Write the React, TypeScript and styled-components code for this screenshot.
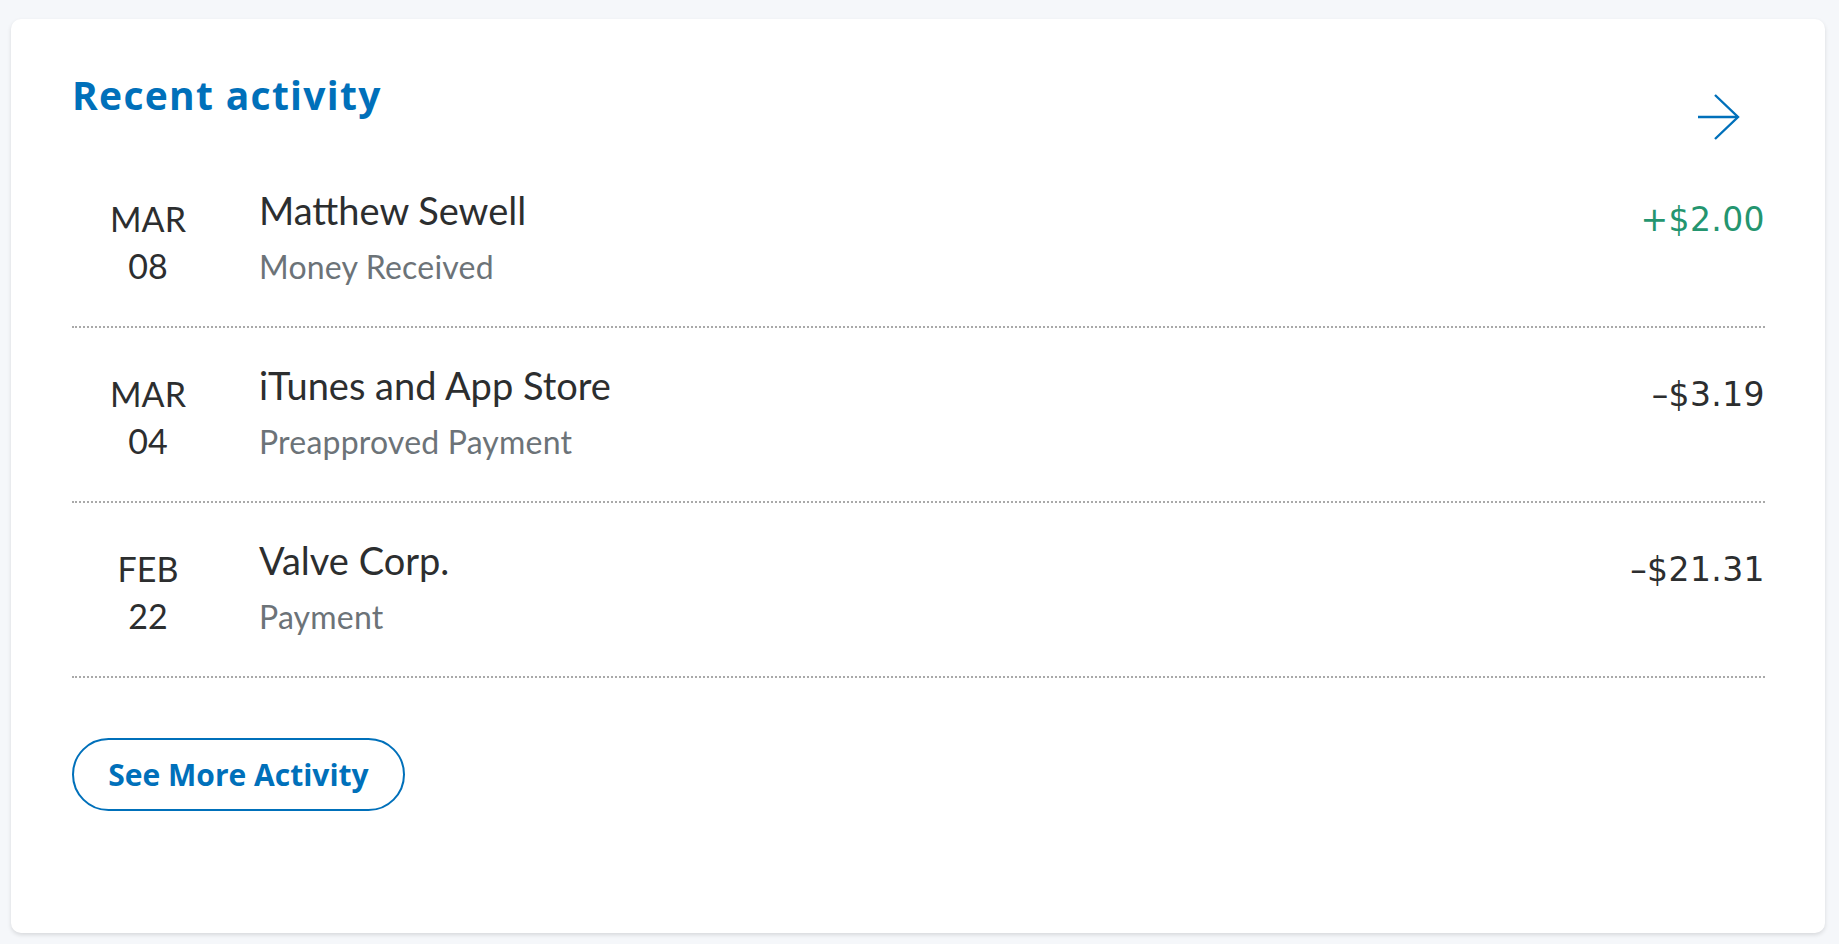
import React from "react";
import styled, { createGlobalStyle } from "styled-components";

const GlobalStyle = createGlobalStyle`
  html, body {
    margin: 0;
    padding: 0;
    background: #f5f7fa;
  }
  body {
    font-family: Lato, "Open Sans", sans-serif;
  }
`;

const Page = styled.div`
  padding: 19px 14px 11px 11px;
  box-sizing: border-box;
  min-height: 944px;
`;

const Card = styled.section`
  background: #ffffff;
  border-radius: 10px;
  box-shadow: 0 2px 4px rgba(0, 0, 0, 0.12);
  padding: 0 60px 122px 61px;
  display: flex;
  flex-direction: column;
`;

const Header = styled.header`
  display: flex;
  justify-content: space-between;
  align-items: flex-start;
  height: 134px;
  box-sizing: border-box;
  padding-top: 52px;
`;

const Title = styled.h2`
  margin: 0;
  font-family: "Open Sans", sans-serif;
  font-weight: 700;
  font-size: 39px;
  letter-spacing: 1.3px;
  line-height: 47px;
  color: #0070ba;
`;

const ArrowLink = styled.a`
  display: block;
  width: 48px;
  height: 48px;
  margin-top: 22px;
  margin-right: 23px;
  color: #0070ba;
`;

const List = styled.ul`
  list-style: none;
  margin: 0;
  padding: 0;
`;

const Row = styled.li`
  display: grid;
  grid-template-columns: 152px 1fr auto;
  column-gap: 35px;
  align-items: start;
  height: 175px;
  box-sizing: border-box;
  padding-top: 34px;
  border-bottom: 2px dotted #a9a9a9;
`;

const DateCol = styled.div`
  margin-top: 8px;
  text-align: center;
  font-family: Lato, sans-serif;
  font-size: 34px;
  line-height: 47px;
  color: #2c2e2f;
`;

const Info = styled.div`
  display: flex;
  flex-direction: column;
`;

const Name = styled.div`
  font-family: Lato, sans-serif;
  font-size: 38px;
  line-height: 46px;
  color: #2c2e2f;
`;

const Sub = styled.div`
  margin-top: 14px;
  font-family: Lato, sans-serif;
  font-size: 32px;
  letter-spacing: 0.2px;
  line-height: 40px;
  color: #6c7378;
`;

const Amount = styled.div<{ $positive?: boolean }>`
  margin-top: 13px;
  font-family: "DejaVu Sans", Verdana, sans-serif;
  font-size: 33px;
  letter-spacing: 0.4px;
  line-height: 40px;
  text-align: right;
  color: ${(p) => (p.$positive ? "#24956f" : "#2c2e2f")};
`;

const Footer = styled.div`
  padding-top: 60px;
`;

const MoreButton = styled.button`
  width: 333px;
  height: 73px;
  box-sizing: border-box;
  border: 2px solid #0070ba;
  border-radius: 37px;
  background: #ffffff;
  color: #0070ba;
  font-family: "Open Sans", sans-serif;
  font-weight: 700;
  font-size: 30px;
  line-height: 1;
  padding: 0;
  cursor: pointer;
`;

type Tx = {
  month: string;
  day: string;
  name: string;
  kind: string;
  amount: string;
  positive?: boolean;
};

const items: Tx[] = [
  { month: "MAR", day: "08", name: "Matthew Sewell", kind: "Money Received", amount: "+$2.00", positive: true },
  { month: "MAR", day: "04", name: "iTunes and App Store", kind: "Preapproved Payment", amount: "\u2013$3.19" },
  { month: "FEB", day: "22", name: "Valve Corp.", kind: "Payment", amount: "\u2013$21.31" },
];

export default function App() {
  return (
    <>
      <GlobalStyle />
      <Page>
        <Card>
          <Header>
            <Title>Recent activity</Title>
            <ArrowLink href="#" aria-label="View all activity">
              <svg width="48" height="48" viewBox="0 0 48 48" fill="none" stroke="currentColor" strokeWidth="2.4">
                <path d="M4 24 H43.5" />
                <path d="M21 2 L44 24 L21 46" />
              </svg>
            </ArrowLink>
          </Header>
          <List>
            {items.map((t) => (
              <Row key={t.name}>
                <DateCol>
                  <div>{t.month}</div>
                  <div>{t.day}</div>
                </DateCol>
                <Info>
                  <Name>{t.name}</Name>
                  <Sub>{t.kind}</Sub>
                </Info>
                <Amount $positive={t.positive}>{t.amount}</Amount>
              </Row>
            ))}
          </List>
          <Footer>
            <MoreButton>See More Activity</MoreButton>
          </Footer>
        </Card>
      </Page>
    </>
  );
}
